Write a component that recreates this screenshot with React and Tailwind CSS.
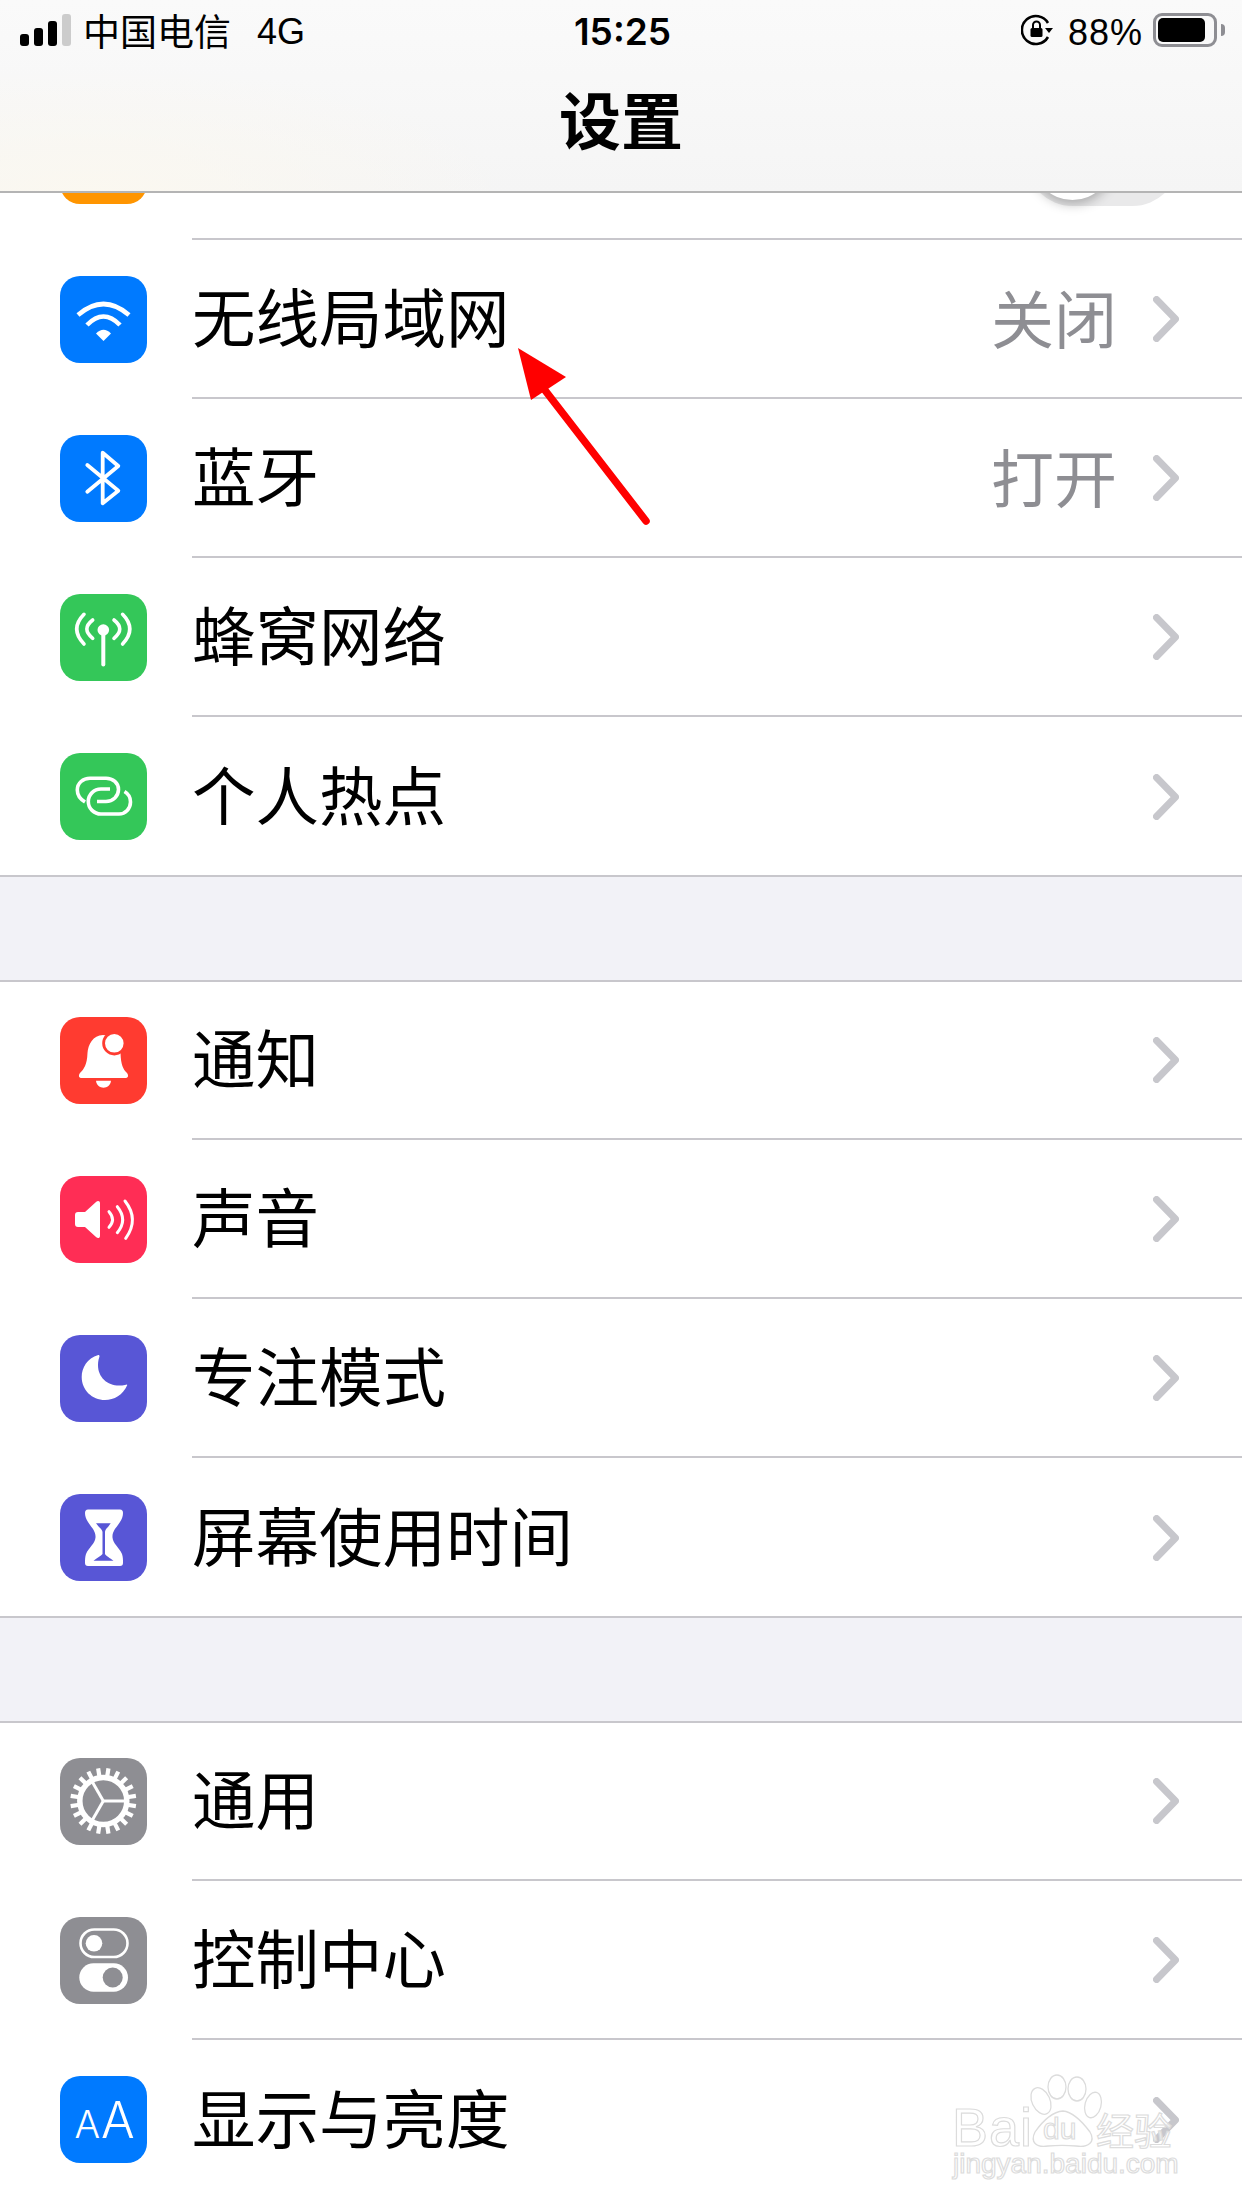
const CJK = "font-['Noto_Sans_CJK_SC',sans-serif]";

function Wifi() {
  return (
    <svg viewBox="0 0 87 87" className="w-[87px] h-[87px]" fill="none" stroke="white" strokeWidth="4.6">
      <path d="M18 39 Q43.5 17 69 39" />
      <path d="M27 49 Q43.5 32 60 49" />
      <path d="M36 57.5 Q43.5 50 51 57.5 L43.5 65 Z" fill="white" stroke="none" />
    </svg>
  );
}
function Bluetooth() {
  return (
    <svg viewBox="0 0 87 87" className="w-[87px] h-[87px]" fill="none" stroke="white" strokeWidth="3.8" strokeLinecap="round" strokeLinejoin="round">
      <path d="M27.3 30 L58.3 55.7 L42.7 68.3 V17.7 L58.3 31 L27.3 56.7" />
    </svg>
  );
}
function Cell() {
  return (
    <svg viewBox="0 0 87 87" className="w-[87px] h-[87px]" fill="none" stroke="white" strokeWidth="3.6" strokeLinecap="round">
      <circle cx="43.3" cy="36" r="5.8" fill="white" stroke="none" />
      <path d="M43.3 36 V70.5" strokeWidth="4" />
      <path d="M32.7 26 Q21 35 32.7 44.3" />
      <path d="M24 20.3 Q9.5 35 24 50" />
      <path d="M54 26 Q65.5 35 54 44.3" />
      <path d="M62.6 20.3 Q77 35 62.6 50" />
    </svg>
  );
}
function Hotspot() {
  return (
    <svg viewBox="0 0 87 87" className="w-[87px] h-[87px]" fill="none" stroke="white" strokeWidth="3.6">
      <path d="M25 49 C20 46 17.3 42 17.3 37 C17.3 30 23 25.3 30 25.3 H46 C53 25.3 58.5 30 58.5 36.5 C58.5 43 53 48.5 46 48.5 H37" />
      <path d="M50 36 H41 C34 36 28.3 41.5 28.3 48.5 C28.3 55.5 34 61 41 61 H59 C65.5 61 70.5 55.5 70.5 49 C70.5 44 68 40.5 64.5 38.5" />
    </svg>
  );
}
function Bell() {
  return (
    <svg viewBox="0 0 87 87" className="w-[87px] h-[87px]" fill="white">
      <path d="M43 18 C33 18 28 28 27.5 36 C27 48 24 52 20 56 C18 59 19 61 22 61 H65 C68 61 69 59 67 56 C63 52 61 48 60.5 36 C60 28 53 18 43 18 Z" />
      <path d="M36 63.7 H51 C50 73 37 73 36 63.7 Z" />
      <circle cx="54.3" cy="26.3" r="10.7" stroke="#ff3b30" strokeWidth="2.8" />
    </svg>
  );
}
function Sound() {
  return (
    <svg viewBox="0 0 87 87" className="w-[87px] h-[87px]" fill="none" stroke="white" strokeWidth="3" strokeLinecap="round">
      <path fill="white" stroke="none" d="M18 36 H25 L36 26 C38 24 40 25 40 27 V60 C40 62 38 63 36 61 L25 51 H18 C16 51 15 50 15 48 V39 C15 37 16 36 18 36 Z" />
      <path d="M49 35.7 Q56 43.5 49 51.3" />
      <path d="M57.3 30.7 Q68 43.7 57.3 56.7" />
      <path d="M65 25 Q79.5 43.5 65.7 62.3" />
    </svg>
  );
}
function Moon() {
  return (
    <svg viewBox="0 0 87 87" className="w-[87px] h-[87px]" fill="white">
      <path d="M38.3 20 C27 23 21.7 33 21.7 42 C21.7 55 32 65 45 65 C54 65 63 60 67.3 50 C67 49 66 49.5 65 50 C50 53 38 44 38 30 C38 26 39 23 39.5 21.5 C39.5 20 39 20 38.3 20 Z" />
    </svg>
  );
}
function Hourglass() {
  return (
    <svg viewBox="0 0 87 87" className="w-[87px] h-[87px]" fill="white">
      <path d="M28 15.5 H60 C62 15.5 63 17 63 19 C63 22 62 25 60 28 C57 33 52 37 52.5 43.5 C53 50 59 53 62 60 C63 63 63 66 63 69 C63 71 62 72 60 72 H28 C26 72 25 71 25 69 C25 66 25 63 26 60 C29 53 35 50 35.5 43.5 C36 37 31 33 28 28 C26 25 25 22 25 19 C25 17 26 15.5 28 15.5 Z" />
      <path fill="#5856d6" d="M36 29.3 H50.7 L48 33 C46 35 45.2 36 45 38 V60 C46 62 50 64 53.5 66.7 H33.5 C37 64 41 62 42.5 60 V38 C42.3 36 41 35 39 33 Z" />
    </svg>
  );
}
function Gear() {
  const teeth = Array.from({ length: 20 }, (_, i) => i * 18 + 9);
  return (
    <svg viewBox="0 0 87 87" className="w-[87px] h-[87px]" fill="none" stroke="white">
      <circle cx="43.3" cy="43" r="23.5" strokeWidth="5.5" />
      {teeth.map((a) => (
        <path key={a} d="M43.3 19 V10" strokeWidth="4.2" transform={`rotate(${a} 43.3 43)`} />
      ))}
      {[90, 210, 330].map((a) => (
        <path key={a} d="M43.3 43 V20" strokeWidth="3" transform={`rotate(${a} 43.3 43)`} />
      ))}
    </svg>
  );
}
function Switches() {
  return (
    <svg viewBox="0 0 87 87" className="w-[87px] h-[87px]" fill="none">
      <rect x="20.5" y="12.5" width="47" height="27.5" rx="13.75" stroke="white" strokeWidth="2.6" />
      <circle cx="34" cy="26.3" r="8.3" fill="white" />
      <rect x="19.3" y="46.3" width="48.7" height="28.4" rx="14.2" fill="white" />
      <circle cx="52.7" cy="60.5" r="10" fill="#8e8e93" />
    </svg>
  );
}
function AA() {
  return (
    <svg viewBox="0 0 87 87" className="w-[87px] h-[87px]" fill="white" fontFamily="Inter,sans-serif" fontWeight="300">
      <text x="14.5" y="61.5" fontSize="38">A</text>
      <text x="41" y="61.5" fontSize="50">A</text>
    </svg>
  );
}
function Chevron() {
  return (
    <svg viewBox="0 0 26 46" className="w-[26px] h-[46px] shrink-0" fill="none" stroke="#c7c7cc" strokeWidth="7" strokeLinecap="round" strokeLinejoin="round">
      <path d="M3.5 3.5 L22.5 23 L3.5 42.5" />
    </svg>
  );
}

function Tile({ color, children }) {
  return (
    <div className={`w-[87px] h-[87px] rounded-[20px] shrink-0 ${color}`}>{children}</div>
  );
}

function Row({ icon, color, label, value, last }) {
  return (
    <div className="flex h-[159px] items-center pl-[60px]">
      <Tile color={color}>{icon}</Tile>
      <div className={`flex h-full flex-1 items-center ml-[45px] pr-[63px] ${last ? "" : "border-b-2 border-[#c8c7cc]"}`}>
        <span className="flex-1 pb-[7px] text-[63.5px] leading-none text-black">{label}</span>
        {value && <span className="mr-[36px] pb-[7px] text-[63px] leading-none text-[#8e8e93]">{value}</span>}
        <Chevron />
      </div>
    </div>
  );
}

function Group({ rows }) {
  return (
    <div className="bg-white">
      {rows.map((r, i) => (
        <Row key={r.label} {...r} last={i === rows.length - 1} />
      ))}
    </div>
  );
}

function Gap() {
  return <div className="relative -my-[1px] h-[107px] border-y-2 border-[#c8c7cc] bg-[#f2f2f7]" />;
}

function StatusBar() {
  return (
    <div className="grid h-[60px] grid-cols-[1fr_auto_1fr] items-center pl-[20px] pr-[17px] text-black font-['Liberation_Sans',sans-serif]">
      <div className="flex items-center">
        <div className="flex h-[32px] items-end gap-[5px]">
          <div className="h-[12px] w-[9px] rounded-[3px] bg-black" />
          <div className="h-[18px] w-[9px] rounded-[3px] bg-black" />
          <div className="h-[25px] w-[9px] rounded-[3px] bg-black" />
          <div className="h-[32px] w-[9px] rounded-[3px] bg-[#cccccc]" />
        </div>
        <span className={`ml-[12px] text-[37px] leading-none ${CJK}`}>中国电信</span>
        <span className="ml-[26px] pt-[4px] text-[36px] leading-none">4G</span>
      </div>
      <span className="pt-[3px] font-['Inter',sans-serif] text-[37px] font-semibold leading-none">15:25</span>
      <div className="flex items-center justify-end">
        <svg viewBox="0 0 32 32" className="h-[32px] w-[32px]" fill="none" stroke="black" strokeWidth="2.6">
          <path d="M27 9 A14 14 0 1 0 27 23" />
          <path d="M24 14 H32 L28 19 Z" fill="black" stroke="none" />
          <rect x="9.5" y="14" width="12" height="9" rx="1.5" fill="black" stroke="none" />
          <path d="M12 14 V11 A3.5 3.5 0 0 1 19 11 V14" strokeWidth="2" />
        </svg>
        <span className="ml-[15px] pt-[5px] text-[36px] leading-none tracking-[1px]">88%</span>
        <div className="ml-[10px] flex h-[34px] w-[64px] items-center rounded-[9px] border-[3px] border-[#8e8e93] p-[2px]">
          <div className="h-full w-[47px] rounded-[5px] bg-black" />
        </div>
        <div className="ml-[4px] h-[12px] w-[4px] rounded-r-full bg-[#8e8e93]" />
      </div>
    </div>
  );
}

function Header() {
  return (
    <div className="h-[193px] border-b-2 border-[#b4b4b4] bg-[radial-gradient(ellipse_420px_130px_at_90px_195px,#fbf8f0,transparent),linear-gradient(180deg,#fafafa,#f5f5f5)]">
      <StatusBar />
      <div className={`mt-[8px] text-center text-[62px] font-bold leading-[100px] text-black ${CJK}`}>设置</div>
    </div>
  );
}

function PartialRow() {
  return (
    <div className="flex h-[47px] flex-col justify-end overflow-hidden">
      <div className="flex h-[159px] shrink-0 items-center pl-[60px]">
        <Tile color="bg-[#ff9500]" />
        <div className="ml-[45px] flex h-full flex-1 items-center justify-end border-b-2 border-[#c8c7cc] pr-[63px]">
          <div className="relative h-[93px] w-[153px] rounded-full bg-[#e9e9ea]">
            <div className="absolute left-[6px] top-[6px] h-[81px] w-[81px] rounded-full bg-white shadow-[0_4px_12px_rgba(0,0,0,0.28)]" />
          </div>
        </div>
      </div>
    </div>
  );
}

function Arrow() {
  return (
    <svg className="absolute left-0 top-0 h-[2208px] w-[1242px] pointer-events-none" viewBox="0 0 1242 2208" fill="none">
      <path d="M544 389 L646 521" stroke="#ff0000" strokeWidth="7.5" strokeLinecap="round" />
      <path d="M518 348 L566 377 L531 400 Z" fill="#ff0000" />
    </svg>
  );
}

function Watermark() {
  const outline = "text-white/70 [-webkit-text-stroke:1.2px_#dcdcdc]";
  return (
    <div className="absolute left-[950px] top-[2070px] h-[115px] w-[232px] pointer-events-none">
      <svg viewBox="0 0 232 115" className="absolute left-0 top-0 h-[115px] w-[232px]" fill="white" fillOpacity="0.7" stroke="#dcdcdc" strokeWidth="1.3">
        <ellipse cx="91" cy="31" rx="9" ry="14" transform="rotate(-25 91 31)" />
        <ellipse cx="107" cy="17" rx="9" ry="12" />
        <ellipse cx="127" cy="19" rx="9" ry="12" />
        <ellipse cx="143" cy="35" rx="8" ry="13" transform="rotate(15 143 35)" />
        <path d="M85 62 C92 52 102 42 113 41 C124 42 134 54 140 62 C146 72 138 78 126 76 C116 75 108 75 98 76 C86 78 80 72 85 62 Z" />
      </svg>
      <span className={`absolute left-[2px] top-[37px] text-[54px] leading-[40px] tracking-[1px] font-['Liberation_Sans',sans-serif] ${outline}`}>Bai</span>
      <span className={`absolute left-[93px] top-[47px] text-[30px] leading-[24px] font-['Liberation_Sans',sans-serif] ${outline}`}>du</span>
      <span className={`absolute left-[146px] top-[40px] text-[38px] leading-[38px] ${CJK} ${outline}`}>经验</span>
      <span className={`absolute left-[3px] top-[80px] text-[28px] leading-[28px] font-['Liberation_Sans',sans-serif] ${outline}`}>jingyan.baidu.com</span>
    </div>
  );
}

const group1 = [
  { icon: <Wifi />, color: "bg-[#007aff]", label: "无线局域网", value: "关闭" },
  { icon: <Bluetooth />, color: "bg-[#007aff]", label: "蓝牙", value: "打开" },
  { icon: <Cell />, color: "bg-[#34c759]", label: "蜂窝网络" },
  { icon: <Hotspot />, color: "bg-[#34c759]", label: "个人热点" },
];
const group2 = [
  { icon: <Bell />, color: "bg-[#ff3b30]", label: "通知" },
  { icon: <Sound />, color: "bg-[#ff2d55]", label: "声音" },
  { icon: <Moon />, color: "bg-[#5856d6]", label: "专注模式" },
  { icon: <Hourglass />, color: "bg-[#5856d6]", label: "屏幕使用时间" },
];
const group3 = [
  { icon: <Gear />, color: "bg-[#8e8e93]", label: "通用" },
  { icon: <Switches />, color: "bg-[#8e8e93]", label: "控制中心" },
  { icon: <AA />, color: "bg-[#007aff]", label: "显示与亮度" },
];

export default function App() {
  return (
    <div className={`relative h-[2208px] w-[1242px] overflow-hidden bg-white ${CJK}`}>
      <Header />
      <PartialRow />
      <Group rows={group1} />
      <Gap />
      <Group rows={group2} />
      <Gap />
      <Group rows={group3} />
      <Arrow />
      <Watermark />
    </div>
  );
}
